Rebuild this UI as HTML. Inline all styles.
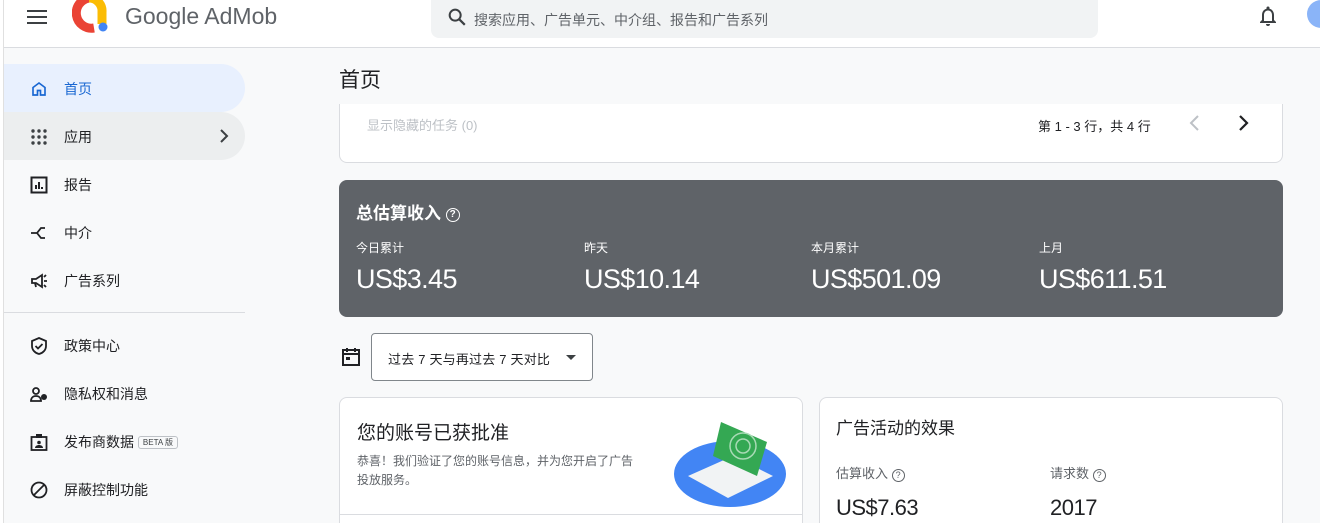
<!DOCTYPE html>
<html><head><meta charset="utf-8"><style>
*{box-sizing:border-box;margin:0;padding:0}
html{width:1320px;height:523px;overflow:hidden}
body{width:1320px;height:523px;overflow:hidden;background:#f8f9fa;font-family:"Liberation Sans","Noto Sans CJK SC",sans-serif;color:#202124;position:relative}
.hdr{position:absolute;left:0;top:0;width:1320px;height:48px;background:#fff;border-bottom:1px solid #dadce0}
.lb{position:absolute;left:0;top:0;width:4px;height:523px;background:#fff;border-right:1px solid #e0e0e0}
.search{position:absolute;left:431px;top:0;width:667px;height:38px;background:#f1f3f4;border-radius:0 0 8px 8px}
.nav{position:absolute;left:4px;width:241px;height:48px;border-radius:0 24px 24px 0;font-size:14px;display:flex;align-items:center}
.nav .ic{position:absolute;left:26px;top:16px;width:18px;height:18px}
.nav span{position:absolute;left:60px;top:15px}
.card{position:absolute;background:#fff;border:1px solid #dadce0;border-radius:8px;overflow:hidden}
.abs{position:absolute}
</style></head><body>
<div class="hdr">
 <div class="abs" style="left:27px;top:10px;width:20px;height:2px;background:#3c4043;box-shadow:0 6px 0 #3c4043,0 12px 0 #3c4043"></div>
 <svg class="abs" style="left:72px;top:0" width="38" height="34" viewBox="0 0 38 34"><path d="M17 -2 A13 13 0 1 0 22 28" fill="none" stroke="#ea4335" stroke-width="9"/><path d="M17 -2 A13 13 0 0 1 30 12 V24" fill="none" stroke="#fbbc04" stroke-width="9"/><circle cx="31" cy="27" r="4.5" fill="#4285f4"/></svg>
 <div class="abs" style="left:125px;top:3px;font-size:23px;color:#5f6368">Google AdMob</div>
 <div class="search"><svg class="abs" style="left:15px;top:6px" width="22" height="22" viewBox="0 0 24 24"><circle cx="10" cy="10" r="6" fill="none" stroke="#3c4043" stroke-width="2.2"/><path d="M14.5 14.5l6 6" stroke="#3c4043" stroke-width="2.4"/></svg><div class="abs" style="left:43px;top:10px;font-size:14px;color:#5f6368">搜索应用、广告单元、中介组、报告和广告系列</div></div>
 <svg class="abs" style="left:1256px;top:4px" width="24" height="24" viewBox="0 0 24 24"><path d="M12 22a2 2 0 002-2h-4a2 2 0 002 2zm6-6V11c0-3-1.6-5.6-4.5-6.3V4a1.5 1.5 0 00-3 0v.7C7.6 5.4 6 8 6 11v5l-2 2v1h16v-1zm-2 1H8v-6c0-2.5 1.5-4.5 4-4.5s4 2 4 4.5z" fill="#3c4043"/></svg>
 <div class="abs" style="left:1307px;top:0px;width:28px;height:28px;border-radius:50%;background:#8ab4f8"></div>
</div>
<div class="lb"></div>
<div class="nav" style="top:64px;background:#e8f0fe;color:#1967d2"><svg class="ic" viewBox="0 0 24 24"><path d="M4 10l8-6 8 6v10h-6v-6h-4v6H4z" fill="none" stroke="#1967d2" stroke-width="2.2"/></svg><span>首页</span></div>
<div class="nav" style="top:112px;background:#eceeef"><svg class="ic" viewBox="0 0 18 18"><g fill="#3c4043"><circle cx="3" cy="3" r="1.7"/><circle cx="9" cy="3" r="1.7"/><circle cx="15" cy="3" r="1.7"/><circle cx="3" cy="9" r="1.7"/><circle cx="9" cy="9" r="1.7"/><circle cx="15" cy="9" r="1.7"/><circle cx="3" cy="15" r="1.7"/><circle cx="9" cy="15" r="1.7"/><circle cx="15" cy="15" r="1.7"/></g></svg><span>应用</span><svg class="abs" style="left:213px;top:16px" width="14" height="16" viewBox="0 0 14 16"><path d="M4 2l6 6-6 6" fill="none" stroke="#3c4043" stroke-width="2"/></svg></div>
<div class="nav" style="top:160px"><svg class="ic" viewBox="0 0 18 18"><rect x="1.5" y="1.5" width="15" height="15" fill="none" stroke="#202124" stroke-width="2"/><path d="M6 13V9M9 13V6M12 13v-2" stroke="#202124" stroke-width="2"/></svg><span>报告</span></div>
<div class="nav" style="top:208px"><svg class="ic" viewBox="0 0 18 18"><path d="M1 9h6l4-5h4M7 9l4 5h4" fill="none" stroke="#202124" stroke-width="1.8"/></svg><span>中介</span></div>
<div class="nav" style="top:256px"><svg class="ic" viewBox="0 0 18 18"><path d="M2 7h4l6-4v12l-6-4H2zM5 11l1 4M14 9h3M14 5l2-2M14 13l2 2" fill="none" stroke="#202124" stroke-width="1.8"/></svg><span>广告系列</span></div>
<div class="abs" style="left:4px;top:312px;width:241px;height:1px;background:#dadce0"></div>
<div class="nav" style="top:321px"><svg class="ic" viewBox="0 0 18 18"><path d="M9 1l7 3v5c0 4-3 7-7 8-4-1-7-4-7-8V4z" fill="none" stroke="#202124" stroke-width="1.8"/><path d="M5.5 9l2.5 2.5 4.5-4.5" fill="none" stroke="#202124" stroke-width="1.8"/></svg><span>政策中心</span></div>
<div class="nav" style="top:369px"><svg class="ic" viewBox="0 0 18 18"><circle cx="6" cy="6" r="3" fill="none" stroke="#202124" stroke-width="1.8"/><path d="M1 16c0-3 2-5 5-5s5 2 5 5z" fill="none" stroke="#202124" stroke-width="1.8"/><circle cx="14" cy="12" r="3" fill="#202124"/></svg><span>隐私权和消息</span></div>
<div class="nav" style="top:417px"><svg class="ic" viewBox="0 0 18 18"><rect x="1.5" y="4" width="15" height="13" fill="none" stroke="#202124" stroke-width="1.8"/><rect x="6" y="1" width="6" height="4" fill="#202124"/><circle cx="9" cy="9.5" r="1.8" fill="#202124"/><path d="M5 15c0-2 2-3 4-3s4 1 4 3" fill="#202124"/></svg><span>发布商数据 <b style="font-size:8px;font-weight:normal;border:1px solid #bdc1c6;border-radius:3px;padding:1px 4px;vertical-align:2px;color:#3c4043">BETA 版</b></span></div>
<div class="nav" style="top:465px"><svg class="ic" viewBox="0 0 18 18"><circle cx="9" cy="9" r="7.5" fill="none" stroke="#202124" stroke-width="1.8"/><path d="M4 14L14 4" stroke="#202124" stroke-width="1.8"/></svg><span>屏蔽控制功能</span></div>

<div class="abs" style="left:339px;top:64px;font-size:21px">首页</div>
<div class="card" style="left:339px;top:104px;width:944px;height:59px;border-top:none;border-radius:0 0 8px 8px">
 <div class="abs" style="left:27px;top:11px;font-size:13px;color:#bdc1c6">显示隐藏的任务 (0)</div>
 <div class="abs" style="left:698px;top:12px;font-size:13px">第 1 - 3 行，共 4 行</div>
 <svg class="abs" style="left:848px;top:10px" width="14" height="18"><path d="M10 2L3 9l7 7" fill="none" stroke="#bdc1c6" stroke-width="2"/></svg>
 <svg class="abs" style="left:896px;top:10px" width="14" height="18"><path d="M4 2l7 7-7 7" fill="none" stroke="#202124" stroke-width="2.2"/></svg>
</div>
<div class="abs" style="left:339px;top:180px;width:944px;height:137px;background:#5f6368;border-radius:8px;color:#fff">
 <div class="abs" style="left:17px;top:19px;font-size:17px;font-weight:bold">总估算收入 <span style="display:inline-block;width:14px;height:14px;border:1.8px solid #fff;border-radius:50%;font-size:10px;text-align:center;line-height:11px;vertical-align:2px">?</span></div>
 <div class="abs" style="left:17px;top:59px;font-size:12px">今日累计</div><div class="abs" style="left:17px;top:84px;font-size:27px;letter-spacing:-0.6px">US$3.45</div>
 <div class="abs" style="left:245px;top:59px;font-size:12px">昨天</div><div class="abs" style="left:245px;top:84px;font-size:27px;letter-spacing:-0.6px">US$10.14</div>
 <div class="abs" style="left:472px;top:59px;font-size:12px">本月累计</div><div class="abs" style="left:472px;top:84px;font-size:27px;letter-spacing:-0.6px">US$501.09</div>
 <div class="abs" style="left:700px;top:59px;font-size:12px">上月</div><div class="abs" style="left:700px;top:84px;font-size:27px;letter-spacing:-0.6px">US$611.51</div>
</div>
<svg class="abs" style="left:341px;top:347px" width="20" height="20" viewBox="0 0 20 20"><rect x="2" y="3" width="16" height="15" fill="none" stroke="#202124" stroke-width="2"/><path d="M2 7h16M6 1v4M14 1v4" stroke="#202124" stroke-width="2"/><rect x="5" y="10" width="4" height="3" fill="#202124"/></svg>
<div class="abs" style="left:371px;top:333px;width:222px;height:48px;border:1px solid #80868b;border-radius:4px;background:#fff;font-size:13px;padding:15px 0 0 16px;letter-spacing:0.2px">过去 7 天与再过去 7 天对比<span style="position:absolute;left:194px;top:21px;border:5px solid transparent;border-top-color:#3c4043"></span></div>
<div class="card" style="left:339px;top:397px;width:464px;height:140px">
 <div class="abs" style="left:17px;top:20px;font-size:19px">您的账号已获批准</div>
 <div class="abs" style="left:17px;top:54px;font-size:12px;color:#5f6368;line-height:19px;width:320px;white-space:nowrap">恭喜！我们验证了您的账号信息，并为您开启了广告<br>投放服务。</div>
 <div class="abs" style="left:0;top:116px;width:464px;height:1px;background:#dadce0"></div>
 <svg class="abs" style="left:333px;top:16px" width="114" height="94" viewBox="0 0 114 94"><ellipse cx="57" cy="60" rx="56" ry="33" fill="#4285f4"/><path d="M15 62l45-20 40 20-45 22z" fill="#f1f3f4"/><path d="M48 8l46 20-10 34-44-20z" fill="#34a853"/><circle cx="70" cy="32" r="13" fill="none" stroke="#a8dab5" stroke-width="1.5"/><circle cx="70" cy="32" r="7" fill="none" stroke="#a8dab5" stroke-width="1.5"/></svg>
</div>
<div class="card" style="left:819px;top:397px;width:464px;height:140px">
 <div class="abs" style="left:16px;top:16px;font-size:17px">广告活动的效果</div>
 <div class="abs" style="left:16px;top:65px;font-size:13px;color:#5f6368">估算收入 <span style="display:inline-block;width:13px;height:13px;border:1.3px solid #5f6368;border-radius:50%;font-size:9px;text-align:center;line-height:11px">?</span></div>
 <div class="abs" style="left:230px;top:65px;font-size:13px;color:#5f6368">请求数 <span style="display:inline-block;width:13px;height:13px;border:1.3px solid #5f6368;border-radius:50%;font-size:9px;text-align:center;line-height:11px">?</span></div>
 <div class="abs" style="left:16px;top:97px;font-size:22px;letter-spacing:-0.5px">US$7.63</div>
 <div class="abs" style="left:230px;top:97px;font-size:22px;letter-spacing:-0.5px">2017</div>
</div>
</body></html>
